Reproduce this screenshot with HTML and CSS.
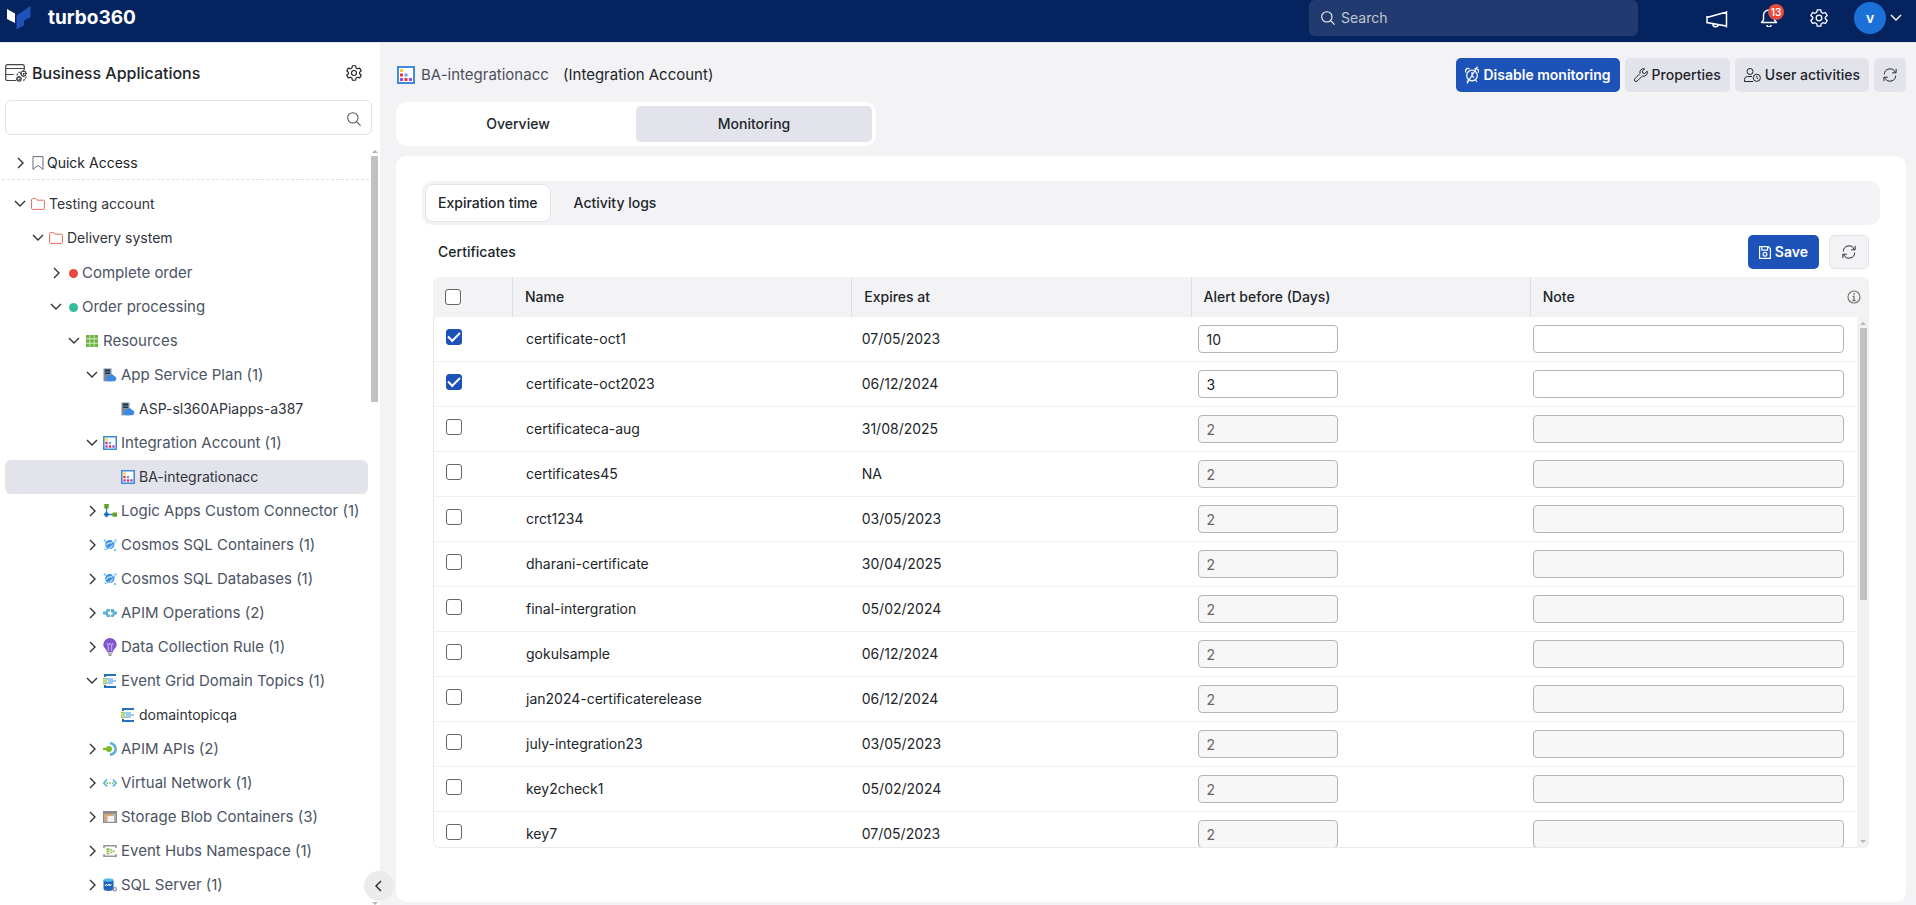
FILE: index.html
```html
<!DOCTYPE html>
<html lang="en">
<head>
<meta charset="utf-8">
<title>turbo360 - Business Applications</title>
<link rel="stylesheet" href="styles.css">
</head>
<body>
<svg class="sprite" aria-hidden="true">
  <symbol id="down" viewBox="0 0 16 16"><path d="M3 5l5 5 5-5" fill="none" stroke="currentColor" stroke-width="1.4"/></symbol>
  <symbol id="right" viewBox="0 0 16 16"><path d="M6 3l5 5-5 5" fill="none" stroke="currentColor" stroke-width="1.4"/></symbol>
  <symbol id="search" viewBox="0 0 16 16"><g fill="none" stroke="currentColor" stroke-width="1.2"><circle cx="6.7" cy="6.7" r="5.9"/><path d="M11 11L15.500 15.500"/></g></symbol>
  <symbol id="gear" viewBox="0 0 18 18"><g fill="none" stroke="currentColor" stroke-width="1.3" stroke-linejoin="round"><path d="M7.200.800h3.600l.5 2.500 1.700 1 2.400-.8 1.800 3.100L15.300 8.200v1.600l1.900 1.600-1.800 3.100-2.400-.8-1.700 1-.5 2.500H7.200l-.5-2.500-1.700-1-2.400.8-1.800-3.100 1.900-1.600V8.200L.8 6.600l1.800-3.100 2.400.8 1.700-1z"/><circle cx="9" cy="9" r="2.800"/></g></symbol>
  <symbol id="refresh" viewBox="0 0 16 16"><g fill="none" stroke="currentColor" stroke-width="1.1"><path d="M1.500 7.200A6.500 6.500 0 0 1 14 5M14.500 8.800A6.500 6.500 0 0 1 2 11M15 1v4.500h-4.500M1 15v-4.500h4.500"/></g></symbol>
  <symbol id="folder" viewBox="0 0 14 12"><path d="M.6 10.400V1.600q0-1 1-1h3l1.400 1.600h6.400q1 0 1 1v7.200q0 1-1 1H1.600q-1 0-1-1z" fill="#fff" stroke="#e5675f"/></symbol>
  <symbol id="bookmark" viewBox="0 0 12 14"><path d="M1 .6h10v12.800L6 9.400l-5 4z" fill="none" stroke="#666e7a"/></symbol>
  <symbol id="grid" viewBox="0 0 14 14"><path fill="#6db33f" d="M1 1h3.600v3.600H1zM5.200 1h3.600v3.600H5.200zM9.400 1H13v3.600H9.400zM1 5.200h3.600v3.600H1zM5.200 5.200h3.600v3.600H5.200zM9.400 5.200H13v3.600H9.400zM1 9.400h3.600V13H1zM5.200 9.400h3.600V13H5.200zM9.400 9.400H13V13H9.400z"/></symbol>
  <symbol id="plan" viewBox="0 0 14 14"><path fill="#7e8a96" d="M.5.5h8v12.800h-8z"/><path fill="#17365c" d="M2 1.500h5v2H2zM2 4.500h5v1.500H2z"/><path fill="#3b8be5" d="M5.500 13.300a2.500 2.500 0 0 1-.3-5 3.300 3.300 0 0 1 6-.2 2.700 2.700 0 0 1 .3 5.200z"/></symbol>
  <symbol id="integ" viewBox="0 0 18 18"><path fill="#fff" stroke="#3f8bd8" stroke-width="2" d="M1 1h16v16H1z"/><path fill="#ffca28" d="M3 3h3v3H3z"/><path fill="#e33" d="M3 7.500h3v3H3zM7.500 12h3v3h-3z"/><path fill="#5ba5ec" d="M7.500 7.500h3v3h-3z"/><path fill="#9a4be0" d="M3 12h3v3H3zM12 12h3v3h-3z"/></symbol>
  <symbol id="logic" viewBox="0 0 14 14"><path d="M3.500 4v6.500H10" fill="none" stroke="#3b7ec4" stroke-width="1.300"/><path fill="#5aa524" d="M1.300 0h4.400v4.400H1.300zM9.600 8.400H14v4.400H9.600z"/><path fill="#1b6fc9" d="M3.500 7.500l3 3-3 3-3-3z"/></symbol>
  <symbol id="cosmos" viewBox="0 0 14 14"><circle cx="6.800" cy="6.500" r="4.600" fill="#3c8edb"/><path d="M3.500 7.500q1-3 3.500-2.500t2.500-2.500M5.500 10q3 0 4-3" fill="none" stroke="#d3ecff" stroke-width="1.100"/><path d="M3 9.500Q.5 12 3 11.500T9.500 7t4-5T11 2.500" fill="none" stroke="#62bdf0" stroke-width=".9"/><path fill="#5fc8f2" d="M.8 1.500h2v2h-2zM11 11h2v2h-2z"/></symbol>
  <symbol id="apimop" viewBox="0 0 14 14"><path fill="#5cb0d6" d="M0 5.500h2.500L4 3h3v2.500H5v3h2V11H4L2.500 8.500H0zM14 5.500h-2L10.500 3H7.800v3.500H9.500v2H7.800V11h2.700L12 8.500h2z"/></symbol>
  <symbol id="bulb" viewBox="0 0 14 18"><path fill="#8155cf" d="M7 0a6.700 6.700 0 0 1 6.700 6.600C13.700 10 10.500 11 10 14H4C3.500 11 .3 10 .3 6.600A6.700 6.700 0 0 1 7 0z"/><path d="M3.800 5l1.500 2.500L7 5l1.700 2.500L10.200 5M5.300 7.500V13M8.700 7.500V13" fill="none" stroke="#d6c2f7" stroke-width=".9"/><path fill="#8d9198" d="M4.500 14.500h5v1.200h-5zM5.500 16.300h3V18h-3z"/></symbol>
  <symbol id="topic" viewBox="0 0 14 14"><path d="M2 3V1h11M2 11v2h11" fill="none" stroke="#2670b8" stroke-width="2"/><path d="M3 5h7M5 7h8M3 9h7" stroke="#4394dd" stroke-width="1.100"/><path fill="#9acb3c" d="M0 4h3v1.600H0zM0 6.300h4v1.500H0zM0 8.600h3v1.600H0z"/></symbol>
  <symbol id="apim" viewBox="0 0 14 14"><path d="M6 1.300a5.700 5.700 0 0 1 0 11.400" fill="none" stroke="#5aafd8" stroke-width="2.600" transform="translate(1)"/><path d="M0 7h5" stroke="#7fb927" stroke-width="2.400"/><circle cx="6" cy="7" r="3" fill="#7fb927"/></symbol>
  <symbol id="vnet" viewBox="0 0 14 14"><path d="M4 3.500L.8 7 4 10.500M10 3.500L13.200 7 10 10.500" fill="none" stroke="#3fb0e0" stroke-width="1.400"/><path fill="#67a83a" d="M3.500 6.300h1.500v1.500H3.500zM6.300 6.300h1.500v1.500H6.300zM9.100 6.300h1.500v1.500H9.100z"/></symbol>
  <symbol id="blob" viewBox="0 0 14 14"><path fill="#8b8b8b" d="M0 1h14v12H0z"/><path fill="#b8b2ad" d="M1.200 3.800h11.600v8H1.200z"/><path fill="#f1a25c" d="M2.500 4.500h7v6h-7z"/><path fill="#f4f1ee" d="M4.500 6h6.500v5.800H4.500z"/></symbol>
  <symbol id="hub" viewBox="0 0 14 14"><path d="M1 4V1.800h12V4M1 10v2.200h12V10" fill="none" stroke="#969696" stroke-width="1.600"/><path fill="#86bf40" d="M3.500 4.300h3V6h-3zM3.500 6.600h3v1.500h-3zM3.500 8.700h3v1.500h-3zM7.300 5.300h2v1.400h-2zM7.300 7.700h2v1.400h-2zM9.800 6.500h2V8h-2z"/></symbol>
  <symbol id="sql" viewBox="0 0 14 14"><path fill="#1f66b8" d="M.5 2v9c0 2.500 10 2.500 10 0V2z"/><ellipse cx="5.500" cy="2" rx="5" ry="1.700" fill="#55bde9"/><path d="M2 8l1.500-2 1 2L6 6l1 2 1.500-2" fill="none" stroke="#fff"/><circle cx="11.800" cy="11.300" r="1.600" fill="#fff" stroke="#8b8f95" stroke-width="1.200"/></symbol>
</svg>

<header class="topbar">
  <a class="brand" href="#">
    <svg class="brand-mark" viewBox="0 0 24 24"><path fill="#fff" d="M0 3l8 4.500V17l-8-4z"/><path fill="#1f52b9" d="M23.500 0v11.200L17 14.500v4.800L9.500 23.500V9.500z"/></svg>
    <span class="brand-name">turbo360</span>
  </a>
  <label class="top-search"><svg class="i14"><use href="#search"/></svg><input type="text" placeholder="Search" aria-label="Search"></label>
  <nav class="top-actions">
    <button class="plain horn" aria-label="Announcements"><svg width="22" height="18" viewBox="0 0 22 18"><path d="M1 6.500L20.500 1v14L1 11.500zM7 12.600a2.600 2.600 0 0 0 5.200 1M1 5v7.500M20.500 0v16.500" fill="none" stroke="currentColor" stroke-width="1.500"/></svg></button>
    <button class="plain bell" aria-label="Notifications"><svg width="18" height="18" viewBox="0 0 18 18"><path d="M1.500 13.500L3.500 11V6.500a5.500 5.500 0 0 1 11 0V11l2 2.500zM7 16a2 2 0 0 0 4 0" fill="none" stroke="currentColor" stroke-width="1.400" stroke-linejoin="round"/></svg><span class="badge">13</span></button>
    <button class="plain" aria-label="Settings"><svg class="i18"><use href="#gear"/></svg></button>
    <button class="plain user" aria-label="Account"><span class="avatar">v</span><svg class="i16"><use href="#down"/></svg></button>
  </nav>
</header>

<div class="shell">
  <aside class="sidebar">
    <div class="side-head">
      <svg width="22" height="18" viewBox="0 0 22 18"><g fill="none" stroke="#444" stroke-width="1.200"><path d="M11 16.500H2.500Q.7 16.500.7 14.700V2.500Q.7.700 2.500.700h15q1.800 0 1.800 1.800V6M.7 4.500h18.600M.7 10.500h8"/><circle cx="18.500" cy="9.500" r="2.500"/><circle cx="14" cy="15" r="2.200"/><path d="M12 11.500a4 4 0 0 1 3.500-3.500M21 12.500a4 4 0 0 1-3.500 4M18.500 6v7M15 9.500h7M14 12v6M11 15h6" stroke-dasharray="2 1"/></g></svg>
      <h1>Business Applications</h1>
      <button class="plain" aria-label="Sidebar settings"><svg class="i16"><use href="#gear"/></svg></button>
    </div>
    <label class="side-search"><input type="text" aria-label="Search applications"><svg class="i14"><use href="#search"/></svg></label>
    <div class="tree-wrap">
      <div class="quick"><svg class="tw"><use href="#right"/></svg><svg class="ti"><use href="#bookmark"/></svg><span>Quick Access</span></div>
      <ul class="tree">
        <li class="l0 dark"><svg class="tw"><use href="#down"/></svg><svg class="ti"><use href="#folder"/></svg><span>Testing account</span></li>
        <li class="l1 dark"><svg class="tw"><use href="#down"/></svg><svg class="ti"><use href="#folder"/></svg><span>Delivery system</span></li>
        <li class="l2"><svg class="tw"><use href="#right"/></svg><i class="dot red"></i><span>Complete order</span></li>
        <li class="l2"><svg class="tw"><use href="#down"/></svg><i class="dot green"></i><span>Order processing</span></li>
        <li class="l3"><svg class="tw"><use href="#down"/></svg><svg class="ti"><use href="#grid"/></svg><span>Resources</span></li>
        <li class="l4"><svg class="tw"><use href="#down"/></svg><svg class="ti"><use href="#plan"/></svg><span>App Service Plan (1)</span></li>
        <li class="l5 dark"><svg class="ti"><use href="#plan"/></svg><span>ASP-sl360APiapps-a387</span></li>
        <li class="l4"><svg class="tw"><use href="#down"/></svg><svg class="ti"><use href="#integ"/></svg><span>Integration Account (1)</span></li>
        <li class="l5 dark selected"><svg class="ti"><use href="#integ"/></svg><span>BA-integrationacc</span></li>
        <li class="l4"><svg class="tw"><use href="#right"/></svg><svg class="ti"><use href="#logic"/></svg><span>Logic Apps Custom Connector (1)</span></li>
        <li class="l4"><svg class="tw"><use href="#right"/></svg><svg class="ti"><use href="#cosmos"/></svg><span>Cosmos SQL Containers (1)</span></li>
        <li class="l4"><svg class="tw"><use href="#right"/></svg><svg class="ti"><use href="#cosmos"/></svg><span>Cosmos SQL Databases (1)</span></li>
        <li class="l4"><svg class="tw"><use href="#right"/></svg><svg class="ti"><use href="#apimop"/></svg><span>APIM Operations (2)</span></li>
        <li class="l4"><svg class="tw"><use href="#right"/></svg><svg class="ti tall"><use href="#bulb"/></svg><span>Data Collection Rule (1)</span></li>
        <li class="l4"><svg class="tw"><use href="#down"/></svg><svg class="ti"><use href="#topic"/></svg><span>Event Grid Domain Topics (1)</span></li>
        <li class="l5 dark"><svg class="ti"><use href="#topic"/></svg><span>domaintopicqa</span></li>
        <li class="l4"><svg class="tw"><use href="#right"/></svg><svg class="ti"><use href="#apim"/></svg><span>APIM APIs (2)</span></li>
        <li class="l4"><svg class="tw"><use href="#right"/></svg><svg class="ti"><use href="#vnet"/></svg><span>Virtual Network (1)</span></li>
        <li class="l4"><svg class="tw"><use href="#right"/></svg><svg class="ti"><use href="#blob"/></svg><span>Storage Blob Containers (3)</span></li>
        <li class="l4"><svg class="tw"><use href="#right"/></svg><svg class="ti"><use href="#hub"/></svg><span>Event Hubs Namespace (1)</span></li>
        <li class="l4"><svg class="tw"><use href="#right"/></svg><svg class="ti"><use href="#sql"/></svg><span>SQL Server (1)</span></li>
      </ul>
      <div class="bar tree-bar"><i class="up"></i><i class="thumb"></i><i class="dn"></i></div>
    </div>
    <button class="collapse" aria-label="Collapse sidebar"><svg class="i16 flip"><use href="#right"/></svg></button>
  </aside>

  <main class="main">
    <div class="page-head">
      <svg class="i18"><use href="#integ"/></svg>
      <h2><span class="res">BA-integrationacc</span> <span>(Integration Account)</span></h2>
      <div class="page-actions">
        <button class="btn primary"><svg width="14" height="18" viewBox="0 0 14 18"><g fill="none" stroke="currentColor" stroke-width="1.200"><circle cx="7" cy="9.500" r="5.300"/><path d="M7 6v4l2 1.500M1 6.500a2.500 2.500 0 0 1 3.500-3.500M13 6.500A2.500 2.500 0 0 0 9.500 3M3.500 14L2 16M10.500 14l1.500 2M12.500.5L2 17.500"/></g></svg>Disable monitoring</button>
        <button class="btn"><svg width="14" height="14" viewBox="0 0 14 14"><path d="M13.200 3.200l-2.400 2.300-2-.4-.4-2L10.700.8A3.800 3.800 0 0 0 6 5.500L.9 10.700a1.500 1.500 0 0 0 2.300 2.300L8.400 8a3.800 3.800 0 0 0 4.800-4.800z" fill="none" stroke="currentColor"/></svg>Properties</button>
        <button class="btn"><svg width="17" height="14" viewBox="0 0 17 14"><g fill="none" stroke="currentColor"><circle cx="6" cy="3.500" r="3"/><path d="M8 8.500H3.500A3 3 0 0 0 .5 11.500V13.500H9"/><circle cx="12.800" cy="9.800" r="3.600"/><path d="M12.800 7.800v2l1.300 1"/></g></svg>User activities</button>
        <button class="btn" aria-label="Refresh"><svg class="i14"><use href="#refresh"/></svg></button>
      </div>
    </div>

    <nav class="tabs"><button>Overview</button><button class="on">Monitoring</button></nav>

    <section class="card">
      <nav class="subtabs"><button class="on">Expiration time</button><button>Activity logs</button></nav>
      <div class="panel">
        <div class="panel-head">
          <h3>Certificates</h3>
          <button class="btn primary save"><svg width="12" height="13" viewBox="0 0 12 13"><g fill="none" stroke="currentColor" stroke-width="1.200"><path d="M.6.600h8.600l2.200 2.200v9.600H.6zM2.800.600v3.600h5.800V.600"/><circle cx="6" cy="8.300" r="1.900"/></g></svg>Save</button>
          <button class="btn outline" aria-label="Reload certificates"><svg class="i14"><use href="#refresh"/></svg></button>
        </div>
        <div class="table-box">
        <table>
          <thead><tr><th><input type="checkbox" aria-label="Select all"></th><th>Name</th><th>Expires at</th><th>Alert before (Days)</th><th>Note<svg class="i14 info" viewBox="0 0 14 14"><circle cx="7" cy="7" r="6" fill="none" stroke="#777" stroke-width="1.200"/><path d="M7 3v1.800M5.500 6.300H7v4M5.300 10.500h3.400" stroke="#777" fill="none" stroke-width="1.300"/></svg></th></tr></thead>
          <tbody>
            <tr><td><input type="checkbox" checked aria-label="Select certificate-oct1"></td><td>certificate-oct1</td><td>07/05/2023</td><td><input type="text" class="days" value="10" aria-label="Alert before"></td><td><input type="text" aria-label="Note"></td></tr>
            <tr><td><input type="checkbox" checked aria-label="Select certificate-oct2023"></td><td>certificate-oct2023</td><td>06/12/2024</td><td><input type="text" class="days" value="3" aria-label="Alert before"></td><td><input type="text" aria-label="Note"></td></tr>
            <tr><td><input type="checkbox" aria-label="Select certificateca-aug"></td><td>certificateca-aug</td><td>31/08/2025</td><td><input type="text" class="days" value="2" disabled aria-label="Alert before"></td><td><input type="text" disabled aria-label="Note"></td></tr>
            <tr><td><input type="checkbox" aria-label="Select certificates45"></td><td>certificates45</td><td>NA</td><td><input type="text" class="days" value="2" disabled aria-label="Alert before"></td><td><input type="text" disabled aria-label="Note"></td></tr>
            <tr><td><input type="checkbox" aria-label="Select crct1234"></td><td>crct1234</td><td>03/05/2023</td><td><input type="text" class="days" value="2" disabled aria-label="Alert before"></td><td><input type="text" disabled aria-label="Note"></td></tr>
            <tr><td><input type="checkbox" aria-label="Select dharani-certificate"></td><td>dharani-certificate</td><td>30/04/2025</td><td><input type="text" class="days" value="2" disabled aria-label="Alert before"></td><td><input type="text" disabled aria-label="Note"></td></tr>
            <tr><td><input type="checkbox" aria-label="Select final-intergration"></td><td>final-intergration</td><td>05/02/2024</td><td><input type="text" class="days" value="2" disabled aria-label="Alert before"></td><td><input type="text" disabled aria-label="Note"></td></tr>
            <tr><td><input type="checkbox" aria-label="Select gokulsample"></td><td>gokulsample</td><td>06/12/2024</td><td><input type="text" class="days" value="2" disabled aria-label="Alert before"></td><td><input type="text" disabled aria-label="Note"></td></tr>
            <tr><td><input type="checkbox" aria-label="Select jan2024-certificaterelease"></td><td>jan2024-certificaterelease</td><td>06/12/2024</td><td><input type="text" class="days" value="2" disabled aria-label="Alert before"></td><td><input type="text" disabled aria-label="Note"></td></tr>
            <tr><td><input type="checkbox" aria-label="Select july-integration23"></td><td>july-integration23</td><td>03/05/2023</td><td><input type="text" class="days" value="2" disabled aria-label="Alert before"></td><td><input type="text" disabled aria-label="Note"></td></tr>
            <tr><td><input type="checkbox" aria-label="Select key2check1"></td><td>key2check1</td><td>05/02/2024</td><td><input type="text" class="days" value="2" disabled aria-label="Alert before"></td><td><input type="text" disabled aria-label="Note"></td></tr>
            <tr><td><input type="checkbox" aria-label="Select key7"></td><td>key7</td><td>07/05/2023</td><td><input type="text" class="days" value="2" disabled aria-label="Alert before"></td><td><input type="text" disabled aria-label="Note"></td></tr>
          </tbody>
        </table>
        <div class="bar table-bar"><i class="up"></i><i class="thumb"></i><i class="dn"></i></div>
        </div>
      </div>
    </section>
  </main>
</div>
</body>
</html>
```
FILE: styles.css
```css
* { box-sizing: border-box; }
body {
  margin: 0;
  height: 100vh;
  display: flex;
  flex-direction: column;
  overflow: hidden;
  background: #f3f3f6;
  color: #212529;
  font: 14px/20px Inter, "Open Sans", sans-serif;
}
button, input { font: inherit; color: inherit; }
button { cursor: pointer; }
h1, h2, h3, ul { margin: 0; padding: 0; font-weight: 400; }
svg { flex: none; display: block; }
.sprite { position: absolute; width: 0; height: 0; }
.plain { display: flex; align-items: center; padding: 0; border: 0; background: none; }
.i14 { width: 14px; height: 14px; }
.i16 { width: 16px; height: 16px; }
.i18 { width: 18px; height: 18px; }
.flip { transform: scaleX(-1); }

/* Top bar */
.topbar {
  display: flex;
  align-items: flex-start;
  flex: none;
  height: 43px;
  padding: 0 12px 0 7px;
  background: #05235f;
  border-bottom: 1px solid #e3e4ea;
  color: #fff;
}
.brand { display: flex; align-items: center; gap: 17px; height: 36px; color: #fff; text-decoration: none; }
.brand-mark { width: 24px; height: 24px; }
.brand-name { font-size: 19px; font-weight: 700; }
.top-search {
  display: flex;
  align-items: center;
  gap: 4px;
  width: 329px;
  height: 36px;
  margin-left: auto;
  padding: 0 12px;
  background: #213b70;
  border-radius: 6px;
}
.top-search input { flex: 1; min-width: 0; border: 0; background: none; outline: 0; }
.top-search input::placeholder { color: #c3c7cd; }
.top-actions { display: flex; align-items: center; gap: 32px; height: 36px; margin-left: 68px; }
.horn { padding-top: 4px; }
.bell { position: relative; }
.badge {
  position: absolute;
  top: -5px;
  left: 8px;
  min-width: 16px;
  background: #e74c3c;
  border-radius: 8px;
  font-size: 10px;
  font-weight: 600;
  line-height: 16px;
  text-align: center;
}
.user { gap: 2px; margin-left: -6px; }
.avatar { width: 32px; height: 32px; border-radius: 50%; background: #1c71d8; line-height: 32px; font-weight: 600; text-align: center; }

/* Layout */
.shell { display: flex; flex: 1; min-height: 0; }
.sidebar { position: relative; display: flex; flex-direction: column; flex: none; width: 380px; background: #fff; }

/* Sidebar */
.side-head { display: flex; align-items: center; gap: 5px; height: 57px; padding: 3px 18px 0 5px; }
.side-head h1 { flex: 1; font-size: 16px; font-weight: 500; }
.side-search {
  display: flex;
  align-items: center;
  height: 35px;
  margin: 0 8px 0 5px;
  padding: 2px 10px 0;
  border: 1px solid #e3e4ea;
  border-radius: 6px;
  color: #555;
}
.side-search input { flex: 1; min-width: 0; border: 0; outline: 0; background: none; }
.tree-wrap { position: relative; flex: 1; min-height: 0; padding-top: 12px; overflow: hidden; }
.quick {
  display: flex;
  align-items: center;
  height: 33px;
  margin: 0 11px 7px 2px;
  padding-left: 10px;
  border-bottom: 1px dashed #dedfe4;
}
.tree { list-style: none; }
.tree li {
  display: flex;
  align-items: center;
  height: 34px;
  margin: 0 12px 0 5px;
  border-radius: 6px;
  color: #4a5463;
  font-size: 15px;
  white-space: nowrap;
}
.tree li.dark { color: #2f343b; font-size: 14px; }
.tree li.selected { background: #e3e3eb; }
.tree .l0 { padding-left: 7px; }
.tree .l1 { margin-bottom: 1px; padding-left: 25px; }
.tree .l2 { padding-left: 43px; }
.tree .l3 { padding-left: 61px; }
.tree .l4 { padding-left: 79px; }
.tree .l5 { padding-left: 116px; }
.tw { width: 16px; height: 16px; margin-right: 3px; color: #333; }
.ti { width: 14px; height: 14px; margin-right: 4px; }
.quick .ti { margin-right: 2px; }
.ti.tall { height: 18px; }
.dot { width: 9px; height: 9px; margin: 0 4px 0 2px; border-radius: 50%; }
.red { background: #ea4a3d; }
.green { background: #35bd9b; }
.collapse {
  position: absolute;
  right: -14px;
  bottom: 4px;
  display: grid;
  place-items: center;
  width: 30px;
  height: 30px;
  padding: 0;
  border: 0;
  border-radius: 50%;
  background: #ebebeb;
}

/* Scroll tracks */
.bar { position: absolute; display: flex; flex-direction: column; align-items: center; }
.bar .thumb { width: 7px; background: #c1c1c1; }
.up, .dn { width: 0; height: 0; border: 3px solid transparent; }
.up { border-top: 0; border-bottom-color: #b5b5b5; }
.dn { margin-top: auto; border-bottom: 0; border-top-color: #b5b5b5; }
.tree-bar { top: 15px; right: 2px; bottom: 0; }
.tree-bar .thumb { height: 246px; margin-top: 3px; }
.table-bar { top: 40px; right: 0; bottom: 0; width: 12px; padding: 5px 0; background: #f1f1f1; }
.table-bar .thumb { height: 272px; margin-top: 3px; }

/* Page */
.main { display: flex; flex-direction: column; flex: 1; min-width: 0; padding: 15px 10px 3px 16px; }
.page-head { display: flex; align-items: center; gap: 6px; height: 34px; padding-left: 1px; }
.page-head h2 { flex: 1; font-size: 15px; }
.page-head h2 .res { margin-right: 10px; color: #4b4f5c; }
.page-actions { display: flex; gap: 5px; }
.btn {
  display: flex;
  align-items: center;
  gap: 4px;
  height: 34px;
  padding: 0 9px;
  border: 0;
  border-radius: 5px;
  background: #e3e3eb;
  font-weight: 500;
  white-space: nowrap;
}
.btn.primary { background: #1d52b8; color: #fff; font-weight: 600; }
.btn.save { padding: 0 11px; }
.btn.outline { padding: 0 12px; border: 1px solid #e3e3eb; background: #f3f3f6; }

.tabs { display: flex; flex: none; width: 480px; height: 44px; margin: 10px 0; padding: 4px; border-radius: 10px; background: #fff; }
.tabs button { flex: 1; border: 0; border-radius: 5px; background: none; font-weight: 500; }
.tabs .on { background: #e3e3eb; }

.card { display: flex; flex-direction: column; flex: 1; min-height: 0; padding: 25px 26px 54px; border-radius: 10px; background: #fff; }
.subtabs { display: flex; flex: none; gap: 10px; height: 44px; padding: 3px; border-radius: 10px; background: #f3f3f6; }
.subtabs button { padding: 0 12px; border: 1px solid transparent; border-radius: 8px; background: none; font-weight: 500; }
.subtabs .on { border-color: #e3e3eb; background: #fff; }
.panel { display: flex; flex-direction: column; flex: 1; min-height: 0; padding: 10px 11px 0; }
.panel-head { display: flex; align-items: center; flex: none; gap: 10px; padding-left: 5px; margin-bottom: 8px; }
.panel-head h3 { flex: 1; font-size: 14px; font-weight: 500; }

/* Certificates table */
.table-box { position: relative; flex: 1; min-height: 0; border-radius: 6px; overflow: hidden; }
table, thead, tbody { display: block; }
table { display: flex; flex-direction: column; height: 100%; }
tbody { flex: 1; min-height: 0; overflow: hidden; padding-right: 12px; border: 1px solid #e9e9ec; border-top: 0; border-radius: 0 0 6px 6px; }
tr { display: grid; grid-template-columns: 79px repeat(4, 1fr); }
th, td { display: flex; align-items: center; padding: 0 12px; }
th { height: 40px; background: #f3f3f6; font-weight: 500; text-align: left; border-left: 1px solid #dcdfe6; }
th:first-child { padding-left: 11px; border-left-color: #f3f3f6; }
td { height: 45px; padding-left: 13px; border-bottom: 1px solid #f1f1f3; }
td:first-child { padding-left: 12px; }
.info { margin-left: auto; margin-right: -4px; }
input[type="checkbox"] {
  appearance: none;
  display: grid;
  place-items: center;
  width: 16px;
  height: 16px;
  margin: 0;
  border: 1px solid #666;
  border-radius: 3px;
  background: #fff;
}
td input[type="checkbox"] { margin-bottom: 4px; }
input[type="checkbox"]:checked { border-color: #1d52b8; background: #1d52b8; }
input[type="checkbox"]:checked::after {
  content: "";
  width: 10px;
  height: 5px;
  margin-bottom: 3px;
  border: solid #fff;
  border-width: 0 0 2px 2px;
  transform: rotate(-45deg);
}
td input[type="text"] { width: 100%; height: 28px; padding: 0 8px; border: 1px solid #b5b5b5; border-radius: 4px; background: #fff; }
td input.days { width: 140px; }
td input[type="text"]:disabled { background: #f7f7f7; color: #666; }
```
